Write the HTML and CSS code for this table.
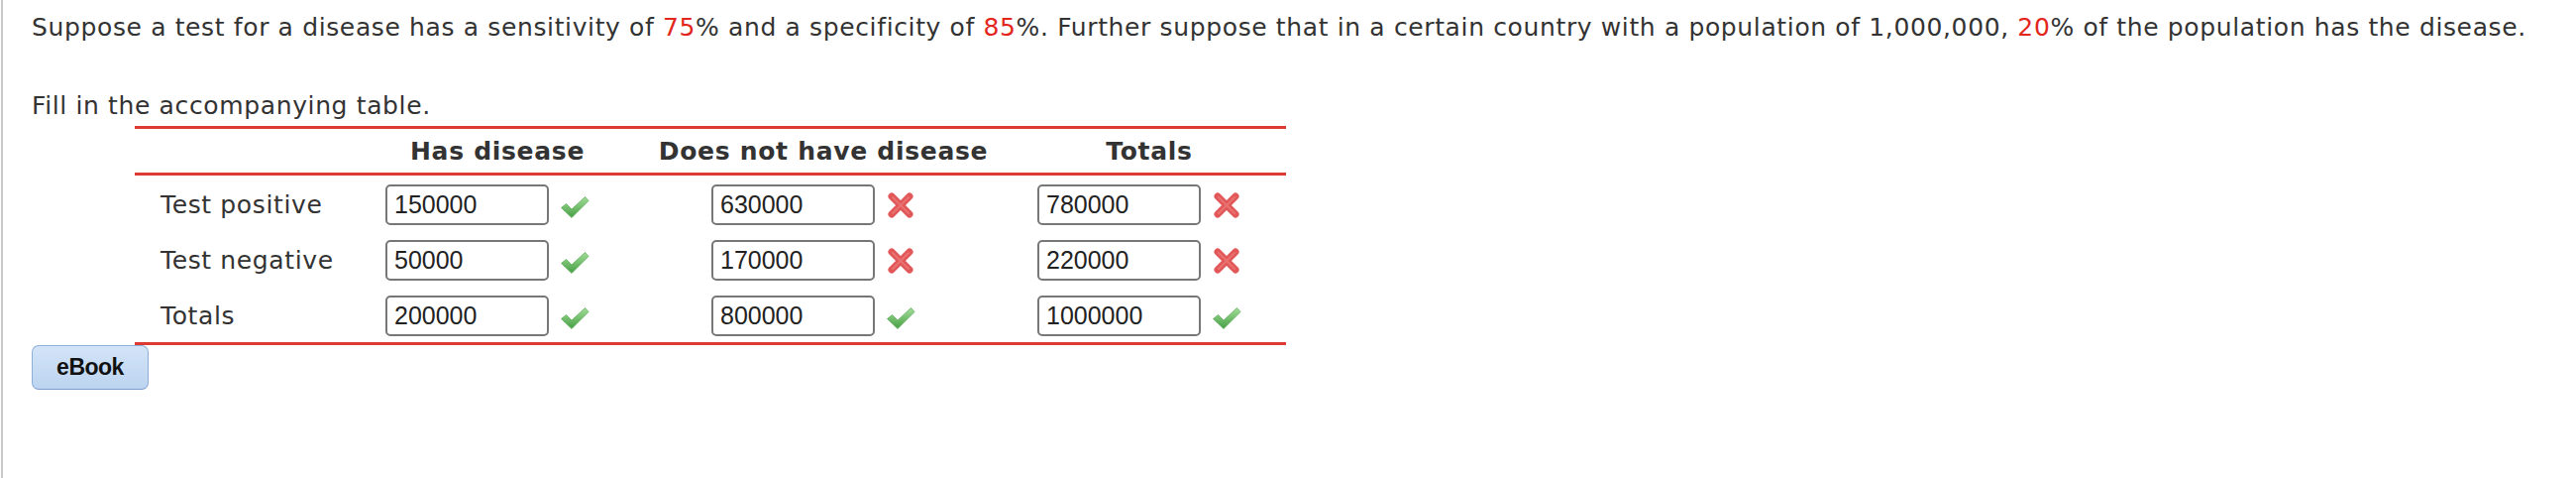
FILE: index.html
```html
<!DOCTYPE html>
<html lang="en">
<head>
<meta charset="utf-8">
<title>Sensitivity and specificity table</title>
<link rel="stylesheet" href="styles.css">
</head>
<body>
<div class="page">
  <p class="question">Suppose a test for a disease has a sensitivity of <span class="hl">75</span>% and a specificity of <span class="hl">85</span>%. Further suppose that in a certain country with a population of 1,000,000, <span class="hl">20</span>% of the population has the disease.</p>
  <p class="fill">Fill in the accompanying table.</p>

  <div class="tbl">
    <div class="thead grid">
      <div class="th"></div>
      <div class="th">Has disease</div>
      <div class="th">Does not have disease</div>
      <div class="th">Totals</div>
    </div>
    <div class="tbody">
      <div class="row grid">
        <div class="label">Test positive</div>
        <div class="cell"><input class="ans" type="text" value="150000"><span class="mark ok"><svg viewBox="0 0 30 24" width="30" height="24"><defs><linearGradient id="g1" x1="0" y1="0" x2="0" y2="1"><stop offset="0" stop-color="#a3de99"/><stop offset="1" stop-color="#459f43"/></linearGradient></defs><path d="M1.5 12.5 L6.5 8.5 L12 14 L25.5 1.5 L29 5.5 L12 22.5 Z" fill="url(#g1)" stroke="#62ad5f" stroke-width="0.8" stroke-linejoin="round"/></svg></span></div>
        <div class="cell"><input class="ans" type="text" value="630000"><span class="mark bad"><svg viewBox="0 0 28 28" width="28" height="28"><path d="M5 5 L23 23 M23 5 L5 23" stroke="#e25757" stroke-width="7" stroke-linecap="round"/><path d="M6 6 L22 22 M22 6 L6 22" stroke="#ef8585" stroke-width="2" stroke-linecap="round" opacity="0.6"/></svg></span></div>
        <div class="cell"><input class="ans" type="text" value="780000"><span class="mark bad"><svg viewBox="0 0 28 28" width="28" height="28"><path d="M5 5 L23 23 M23 5 L5 23" stroke="#e25757" stroke-width="7" stroke-linecap="round"/><path d="M6 6 L22 22 M22 6 L6 22" stroke="#ef8585" stroke-width="2" stroke-linecap="round" opacity="0.6"/></svg></span></div>
      </div>
      <div class="row grid">
        <div class="label">Test negative</div>
        <div class="cell"><input class="ans" type="text" value="50000"><span class="mark ok"><svg viewBox="0 0 30 24" width="30" height="24"><path d="M1.5 12.5 L6.5 8.5 L12 14 L25.5 1.5 L29 5.5 L12 22.5 Z" fill="url(#g1)" stroke="#62ad5f" stroke-width="0.8" stroke-linejoin="round"/></svg></span></div>
        <div class="cell"><input class="ans" type="text" value="170000"><span class="mark bad"><svg viewBox="0 0 28 28" width="28" height="28"><path d="M5 5 L23 23 M23 5 L5 23" stroke="#e25757" stroke-width="7" stroke-linecap="round"/><path d="M6 6 L22 22 M22 6 L6 22" stroke="#ef8585" stroke-width="2" stroke-linecap="round" opacity="0.6"/></svg></span></div>
        <div class="cell"><input class="ans" type="text" value="220000"><span class="mark bad"><svg viewBox="0 0 28 28" width="28" height="28"><path d="M5 5 L23 23 M23 5 L5 23" stroke="#e25757" stroke-width="7" stroke-linecap="round"/><path d="M6 6 L22 22 M22 6 L6 22" stroke="#ef8585" stroke-width="2" stroke-linecap="round" opacity="0.6"/></svg></span></div>
      </div>
      <div class="row grid">
        <div class="label">Totals</div>
        <div class="cell"><input class="ans" type="text" value="200000"><span class="mark ok"><svg viewBox="0 0 30 24" width="30" height="24"><path d="M1.5 12.5 L6.5 8.5 L12 14 L25.5 1.5 L29 5.5 L12 22.5 Z" fill="url(#g1)" stroke="#62ad5f" stroke-width="0.8" stroke-linejoin="round"/></svg></span></div>
        <div class="cell"><input class="ans" type="text" value="800000"><span class="mark ok"><svg viewBox="0 0 30 24" width="30" height="24"><path d="M1.5 12.5 L6.5 8.5 L12 14 L25.5 1.5 L29 5.5 L12 22.5 Z" fill="url(#g1)" stroke="#62ad5f" stroke-width="0.8" stroke-linejoin="round"/></svg></span></div>
        <div class="cell"><input class="ans" type="text" value="1000000"><span class="mark ok"><svg viewBox="0 0 30 24" width="30" height="24"><path d="M1.5 12.5 L6.5 8.5 L12 14 L25.5 1.5 L29 5.5 L12 22.5 Z" fill="url(#g1)" stroke="#62ad5f" stroke-width="0.8" stroke-linejoin="round"/></svg></span></div>
      </div>
    </div>
  </div>

  <button class="ebook" type="button">eBook</button>
</div>
</body>
</html>
```

FILE: styles.css
```css
html, body {
  margin: 0;
  padding: 0;
  background: #ffffff;
}

body {
  font-family: "DejaVu Sans", Verdana, sans-serif;
  color: #333333;
}

.page {
  margin-left: 1px;
  border-left: 2px solid #c9c9c9;
  padding: 10px 0 0 29px;
  min-height: 472px;
}

.question,
.fill {
  margin: 0;
  font-size: 25px;
  line-height: 35px;
  letter-spacing: 0.63px;
  white-space: nowrap;
}

.question {
  margin-bottom: 44px;
}

.fill {
  margin-bottom: 3px;
}

.hl {
  color: #e3261c;
}

.tbl {
  width: 1162px;
  margin-left: 104px;
}

.grid {
  display: grid;
  grid-template-columns: 228px 276px 382px 276px;
}

.thead {
  border-top: 3px solid #dc3a32;
  border-bottom: 3px solid #dc3a32;
  height: 44px;
  align-items: center;
}

.th {
  font-size: 25px;
  font-weight: bold;
  text-align: center;
  color: #333333;
  line-height: 35px;
  letter-spacing: 0.7px;
}

.tbody {
  border-bottom: 3px solid #dc3a32;
}

.row {
  height: 56px;
  box-sizing: border-box;
  padding: 9px 0 6px;
  align-items: center;
}

.label {
  font-size: 25px;
  line-height: 35px;
  letter-spacing: 0.63px;
  padding-left: 26px;
  color: #333333;
}

.cell {
  display: flex;
  align-items: center;
  justify-content: center;
  padding-right: 20px;
}

.ans {
  box-sizing: border-box;
  width: 165px;
  height: 41px;
  border: 2px solid #777777;
  border-radius: 5px;
  padding: 0 7px;
  margin: 0;
  font-family: "Liberation Sans", Arial, sans-serif;
  font-size: 25px;
  color: #222222;
  background: #ffffff;
}

.mark {
  display: flex;
  align-items: center;
  justify-content: center;
  width: 30px;
  margin-left: 11px;
}

.mark.ok svg {
  margin-top: 4px;
}

.ebook {
  display: block;
  box-sizing: border-box;
  width: 118px;
  height: 45px;
  margin: 0;
  padding: 0;
  border: 1px solid #8eaed6;
  border-bottom-color: #7c9ccb;
  border-radius: 7px;
  background: linear-gradient(#d3e4f8, #bcd4f0);
  font-family: "Liberation Sans", Arial, sans-serif;
  font-weight: bold;
  font-size: 23px;
  letter-spacing: -0.5px;
  color: #111111;
}
```
